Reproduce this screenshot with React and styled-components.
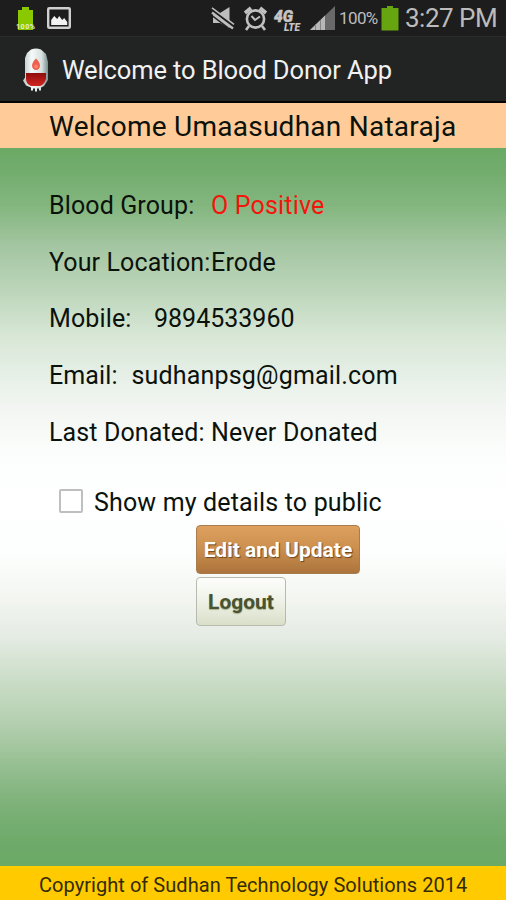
import React from "react";
import styled, { createGlobalStyle } from "styled-components";

const GlobalStyle = createGlobalStyle`
  *, *::before, *::after { box-sizing: border-box; }
  body { margin: 0; background: #212121; }
`;

const Screen = styled.div`
  display: flex;
  flex-direction: column;
  width: 506px;
  height: 900px;
  overflow: hidden;
  font-family: Roboto, "Noto Sans", sans-serif;
  color: #0b120b;
`;

const Label = styled.span`
  flex: none;
  white-space: pre;
  font-size: ${(p) => p.$size || 25}px;
  letter-spacing: ${(p) => p.$track || 0}px;
  width: ${(p) => (p.$width ? `${p.$width}px` : "auto")};
  color: ${(p) => p.$color || "inherit"};
`;

const StatusBar = styled.div`
  flex: none;
  display: flex;
  align-items: center;
  height: 37px;
  padding: 0 8px 0 16px;
  background: #1d1d1d;
  border-bottom: 1px solid #2b2b2b;
  color: #bcbcbc;
`;

const Notifications = styled.div`
  display: flex;
  gap: 11px;
  align-items: center;
  margin-right: auto;
`;

const Indicators = styled.div`
  display: flex;
  align-items: center;
`;

const Glyph = styled.svg`
  display: block;
  flex: none;
  margin-right: ${(p) => p.$gap || 0}px;
`;

const TitleBar = styled.header`
  flex: none;
  display: flex;
  align-items: center;
  gap: 13px;
  height: 66px;
  padding: 2px 0 0 22px;
  background: #222423;
  border-bottom: 2px solid #050505;
  color: #f1f1f1;
`;

const Greeting = styled.div`
  flex: none;
  display: flex;
  align-items: center;
  height: 45px;
  padding: 2px 0 0 49px;
  background: #ffcb98;
`;

const Content = styled.main`
  flex: 1;
  display: flex;
  flex-direction: column;
  padding: 29px 0 0 49px;
  background: linear-gradient(
    #6baa65 0%, #73ad6e 3.5%, #83b67f 8%, #a3c5a0 13.5%, #bdd6bb 20%,
    #d7e6d5 26%, #e7f0e8 32%, #f2f5f1 36%, #fbfdfc 42%, #ffffff 49%,
    #fcfefd 57%, #f2f5f0 63%, #e5ece4 68%, #c9dcc6 74.5%, #b4cfb0 80%,
    #96bf92 86%, #7bb076 92%, #6eaa6a 97%, #6baa65 100%
  );
`;

const DetailRow = styled.div`
  flex: none;
  display: flex;
  align-items: center;
  height: 56.7px;
`;

const PublicOption = styled.label`
  display: flex;
  align-items: center;
  gap: 11px;
  height: 36px;
  margin-top: 24px;
  padding-left: 10px;
  padding-top: 1px;
`;

const Checkbox = styled.input`
  appearance: none;
  flex: none;
  width: 24px;
  height: 24px;
  margin: -3px 0 0;
  border: 2px solid #bfbfbf;
  border-radius: 2px;
  background: #fff;
`;

const Actions = styled.div`
  display: flex;
  flex-direction: column;
  align-items: flex-start;
  gap: 3px;
  margin: 5px 0 0 147px;
`;

const Button = styled.button`
  display: flex;
  align-items: center;
  justify-content: center;
  width: ${(p) => p.$width}px;
  height: 49px;
  padding: 1px 0 0;
  border: 1px solid ${(p) => (p.$primary ? "#a97c50" : "#b7bbae")};
  border-radius: 4px;
  font: 700 21px Roboto, sans-serif;
  white-space: nowrap;
  color: ${(p) => (p.$primary ? "#fff" : "#4a5330")};
  text-shadow: ${(p) => (p.$primary ? "1px 1px 1px #6f4620" : "0 1px 1px #a9b08f")};
  background: ${(p) =>
    p.$primary
      ? "linear-gradient(#dda05f, #cd914f 45%, #ac743c)"
      : "linear-gradient(#fdfefc, #eef1e7 50%, #d9dfc9)"};
`;

const Footer = styled.footer`
  flex: none;
  display: flex;
  align-items: center;
  height: 34px;
  padding: 3px 0 0 39px;
  background: #ffca00;
  color: #332b05;
`;

const BatteryNotice = () => (
  <Glyph width="20" height="26" viewBox="0 0 20 26">
    <path d="M6 2h7v3h4v20H2V5h4z" fill="#8ac800" />
    <text x="0" y="24" fontSize="7" fontWeight="700" fill="#e7efd9" textLength="19" fontFamily="Roboto">100%</text>
  </Glyph>
);

const PictureIcon = () => (
  <Glyph width="24" height="22" viewBox="0 0 24 22">
    <rect x="1.2" y="1.2" width="21.6" height="19.6" rx="1" fill="none" stroke="#d0d0d0" strokeWidth="2.4" />
    <path d="M4.2 18v-5l3-4 3 3 2-3 3 4 2-2 3 4v3z" fill="#f2f2f2" />
  </Glyph>
);

const MuteIcon = () => (
  <Glyph $gap={7} width="25" height="24" viewBox="0 0 25 24">
    <path d="M2 7h7l9.500-6V22L9 17H2z" fill="#bdbdbd" />
    <path d="M0 3.200l23 17.500" stroke="#1d1d1d" strokeWidth="3" />
    <path d="M1 6.500l21 16" stroke="#bdbdbd" strokeWidth="2.400" />
    <path d="M0 8.800l17 13" stroke="#1d1d1d" strokeWidth="1.400" />
    <path d="M1 1.800l22 16.500" stroke="#bdbdbd" strokeWidth="1.500" />
  </Glyph>
);

const AlarmIcon = () => (
  <Glyph $gap={5} width="25" height="25" viewBox="0 0 25 25" fill="none" stroke="#c0c0c0">
    <circle cx="12.500" cy="13" r="8.600" strokeWidth="2.600" />
    <path d="M2 7l6-5M17 2l6 5" strokeWidth="3.600" />
    <path d="M8.500 10l3.500 4 5-3.500" strokeWidth="2" />
    <path d="M6 20l-3 4M19 20l3 4" strokeWidth="2.600" />
  </Glyph>
);

const LteIcon = () => (
  <Glyph $gap={9} width="28" height="28" viewBox="0 0 28 28" fill="#c5c5c5" fontFamily="Roboto" fontWeight="900" fontStyle="italic">
    <text x="1" y="18" fontSize="16" textLength="19" lengthAdjust="spacingAndGlyphs" stroke="#c5c5c5" strokeWidth=".5">4G</text>
    <text x="11" y="26.500" fontSize="10" textLength="16" lengthAdjust="spacingAndGlyphs" stroke="#1d1d1d" strokeWidth="1.500" paintOrder="stroke">LTE</text>
  </Glyph>
);

const SignalIcon = () => (
  <Glyph $gap={4} width="25" height="24" viewBox="0 0 25 24">
    <path d="M0 24L25 0v24z" fill="#696969" />
    <path d="M0 24l15-14.400V24z" fill="#b8b8b8" />
    <path d="M5.500 18.500v6M10.500 14v10" stroke="#858585" strokeWidth="1" />
  </Glyph>
);

const BatteryIcon = () => (
  <Glyph $gap={6} width="18" height="26" viewBox="0 0 18 26">
    <path d="M6 1h6v2h5.500v22.500H.5V3H6z" fill="#66a510" />
  </Glyph>
);

const BloodBagIcon = () => (
  <Glyph width="27" height="44" viewBox="0 0 27 44">
    <defs>
      <linearGradient id="bag">
        <stop offset="0" stopColor="#b7c6c5" />
        <stop offset=".35" stopColor="#f5faf9" />
        <stop offset=".75" stopColor="#d5e0df" />
        <stop offset="1" stopColor="#7b8c8c" />
      </linearGradient>
      <linearGradient id="blood" x2="0" y2="1">
        <stop offset="0" stopColor="#8f0d0d" />
        <stop offset="1" stopColor="#d22620" />
      </linearGradient>
    </defs>
    <path d="M9 1.500q5-2 10 0l5 4.500 2 8v18l-4 6-3 1.500v3h-2v-2h-2v3h-2v-3h-2v2h-2v-3l-5-2-3-5 2-3V10l2-5z" fill="url(#bag)" />
    <path d="M4 25h20v6q-2 6-6 7H9q-5-2-5-7z" fill="url(#blood)" />
    <path d="M14 10.500c2 2 4 4.500 4 7a4 4.500 0 0 1-8 0c0-2.500 2-5 4-7z" fill="#ef5f4e" />
    <circle cx="14" cy="18.500" r="2" fill="#f98370" />
  </Glyph>
);

const details = [
  { label: "Blood Group:", value: "O Positive", width: 162, color: "#f4150c" },
  { label: "Your Location:", value: "Erode", width: 162 },
  { label: "Mobile:", value: "9894533960", width: 105, track: 0 },
  { label: "Email:", value: "sudhanpsg@gmail.com", width: 82.5 },
  { label: "Last Donated:", value: "Never Donated", width: 162 },
];

export default function App() {
  return (
    <Screen>
      <GlobalStyle />
      <StatusBar>
        <Notifications>
          <BatteryNotice />
          <PictureIcon />
        </Notifications>
        <Indicators>
          <MuteIcon />
          <AlarmIcon />
          <LteIcon />
          <SignalIcon />
          <Label $size={17} $width={42} $track={-0.6}>100%</Label>
          <BatteryIcon />
          <Label $size={26} $width={93} $track={-0.5}>3:27 PM</Label>
        </Indicators>
      </StatusBar>
      <TitleBar>
        <BloodBagIcon />
        <Label $size={25.5} $track={-0.12}>Welcome to Blood Donor App</Label>
      </TitleBar>
      <Greeting>
        <Label $size={28} $track={0.25}>Welcome Umaasudhan Nataraja</Label>
      </Greeting>
      <Content>
        {details.map((d) => (
          <DetailRow key={d.label}>
            <Label $width={d.width} $track={0.12}>{d.label}</Label>
            <Label $color={d.color} $track={d.track ?? 0.18}>{d.value}</Label>
          </DetailRow>
        ))}
        <PublicOption>
          <Checkbox type="checkbox" />
          <Label $track={0.16}>Show my details to public</Label>
        </PublicOption>
        <Actions>
          <Button $primary $width={164}>Edit and Update</Button>
          <Button $width={90}>Logout</Button>
        </Actions>
      </Content>
      <Footer>
        <Label $size={20} $track={0.05}>Copyright of Sudhan Technology Solutions 2014</Label>
      </Footer>
    </Screen>
  );
}
